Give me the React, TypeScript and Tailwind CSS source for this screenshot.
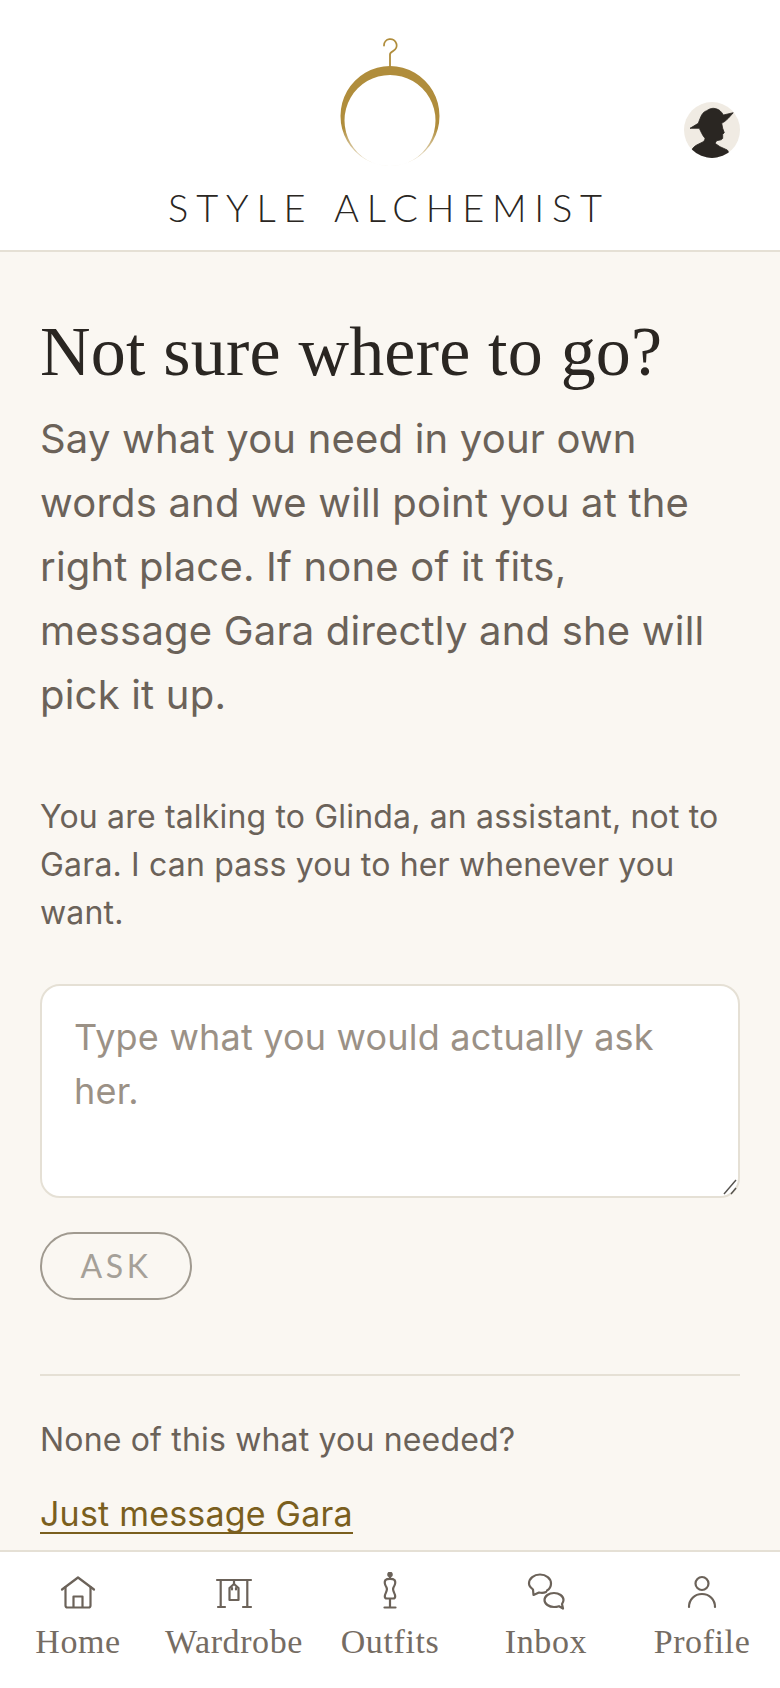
import React from "react";

const inter = "font-['Inter',sans-serif]";
const serif = "font-['Liberation_Serif',serif]";

function Logo() {
  return (
    <svg width="110" height="130" viewBox="335 38 110 130" className="block" fill="none">
      <defs>
        <linearGradient id="fade" x1="0" y1="66" x2="0" y2="166" gradientUnits="userSpaceOnUse">
          <stop offset="0" stopColor="#b08d3c" />
          <stop offset="0.62" stopColor="#b08d3c" />
          <stop offset="1" stopColor="#b08d3c" stopOpacity="0.1" />
        </linearGradient>
      </defs>
      <path
        fillRule="evenodd"
        fill="url(#fade)"
        d="M390 66a49.500 50 0 1 1 -0.01 0Z M390 75a45.500 45.500 0 1 0 0.01 0Z"
      />
      <path
        d="M384 45.500a6.300 6.300 0 1 1 9 5.600c-2 1-3 1.600-3 3.400V67"
        stroke="#b08d3c"
        strokeWidth="1.8"
        strokeLinecap="round"
      />
    </svg>
  );
}

function Avatar() {
  return (
    <svg width="56" height="56" viewBox="0 0 56 56" className="block">
      <defs>
        <clipPath id="av"><circle cx="28" cy="28" r="28" /></clipPath>
      </defs>
      <circle cx="28" cy="28" r="28" fill="#f0ebe3" />
      <g clipPath="url(#av)" fill="#2a2622" stroke="#2a2622" strokeWidth="0.8" strokeLinejoin="round">
        <path d="M6 26.300 L14.300 21.300 C15.500 18 16.500 15 17.700 13 C19 10.500 21 9.300 22.700 8.700 C25 7 27.500 6.300 29.300 6.300 C32 6.500 34.500 7.500 36 8.700 C37.500 10 38.500 11.500 39.300 13 L49.300 10.700 L44.300 16.300 C42 18.500 40 20.300 37.700 21.300 L38.700 26.300 L40.300 30.700 L38.700 32.300 L38.700 36.300 C38 37.500 37 38 36 38 L32.700 38.700 L31 41.300 L36 44.700 L43.300 48 C44.500 49.500 45 51 45.300 56 L8 56 L7.700 48 C9 45.500 11 44 12.700 43 L19.300 39.700 C20.500 38.500 21 37.500 21 36.300 C19.500 34.500 18.500 33 17.700 31.300 L15.300 26.300 Z" />
      </g>
    </svg>
  );
}

const ic = { fill: "none", stroke: "#6b6259", strokeWidth: 2.2, strokeLinecap: "round" as const, strokeLinejoin: "round" as const };

function HomeIcon() {
  return (
    <svg width="40" height="40" viewBox="0 0 40 40" className="block" {...ic}>
      <path d="M4 17.500 20 5.500 36 17.500" />
      <path d="M7.500 15V33.500a2 2 0 0 0 2 2h21a2 2 0 0 0 2-2V15" />
      <path d="M15.500 35V24.500h9V35" />
    </svg>
  );
}
function WardrobeIcon() {
  return (
    <svg width="40" height="40" viewBox="0 0 40 40" className="block" {...ic}>
      <path d="M3 8H37" />
      <path d="M6.700 8V35M33.300 8V35" />
      <path d="M4 35H11M29 35H37" />
      <path d="M20 8V12" />
      <path d="M20 12l-4.500 4v12h9V16z" />
      <path d="M18 17.500V16M22 17.500V16" />
    </svg>
  );
}
function OutfitIcon() {
  return (
    <svg width="40" height="40" viewBox="0 0 40 40" className="block" {...ic}>
      <circle cx="20" cy="2.500" r="1.700" fill="#6b6259" />
      <path d="M20 4v3" />
      <path d="M15.500 8C14 10 15 13 16.500 15.500 C18 17.500 16 20 15 23 C14.500 25 15 26 16 26.500 H24 C25 26 25.500 25 25 23 C24 20 22 17.500 23.500 15.500 C25 13 26 10 24.500 8 C23 6.500 17 6.500 15.500 8Z" />
      <path d="M20 27v8" />
      <path d="M14.500 35.500h11" />
    </svg>
  );
}
function InboxIcon() {
  return (
    <svg width="40" height="40" viewBox="0 0 40 40" className="block" {...ic}>
      <path d="M21 18.500C23.500 17 25 14.500 25 11.500 25 6.500 20 2.500 14 2.500S3 6.500 3 11.500C3 13.500 4.500 15.500 7 17.500L7.500 23 13 20.500C15 21 18 21 20 20" />
      <path d="M36 32C37 30.500 37.500 29.500 37.500 28 37.500 24 33 21 28 21S18.500 24 18.500 28 23 35 28 35C30 35 31.500 34.700 33 34.200L37 36.500Z" />
    </svg>
  );
}
function ProfileIcon() {
  return (
    <svg width="40" height="40" viewBox="0 0 40 40" className="block" {...ic}>
      <circle cx="20" cy="11.500" r="6.500" />
      <path d="M7 35c0-7.500 5.500-13 13-13s13 5.500 13 13" />
    </svg>
  );
}

const nav = [
  { label: "Home", icon: <HomeIcon /> },
  { label: "Wardrobe", icon: <WardrobeIcon /> },
  { label: "Outfits", icon: <OutfitIcon /> },
  { label: "Inbox", icon: <InboxIcon /> },
  { label: "Profile", icon: <ProfileIcon /> },
];

export default function App() {
  return (
    <div className={`h-[1688px] w-[780px] flex flex-col bg-[#faf7f2] overflow-hidden ${inter}`}>
      <header className="h-[252px] shrink-0 bg-white border-b-2 border-[#e5e0d5] grid grid-cols-[1fr_auto_1fr] px-[40px]">
        <div />
        <div className="flex flex-col items-center pt-[38px]">
          <Logo />
          <div className="mt-[22px] text-[38px] leading-[34px] font-light tracking-[0.205em] text-[#2a2622] font-['Lato',sans-serif] whitespace-nowrap [word-spacing:4px] pr-[2px]">
            STYLE ALCHEMIST
          </div>
        </div>
        <div className="flex justify-end pt-[102px]">
          <Avatar />
        </div>
      </header>

      <main className="flex-1 min-h-0 px-[40px] pt-[58px]">
        <h1 className={`${serif} text-[70px] leading-[84px] font-normal tracking-[0.2px] text-[#2a2622]`}>
          Not sure where to go?
        </h1>
        <p className="mt-[13px] text-[40px] leading-[64px] tracking-[0.2px] text-[#6b6259]">
          Say what you need in your own words and we will point you at the right place. If none of it fits, message Gara directly and she will pick it up.
        </p>
        <p className="mt-[66px] text-[32px] leading-[48px] tracking-[0.17px] text-[#6b6259]">
          You are talking to Glinda, an assistant, not to Gara. I can pass you to her whenever you want.
        </p>
        <div className="relative mt-[47px]">
          <textarea
            className="block w-full h-[214px] resize-none rounded-[20px] border-2 border-[#e5e0d5] bg-white px-[32px] pt-[24px] pb-[16px] text-[36px] leading-[54px] tracking-[0.2px] text-[#2a2622] placeholder:text-[#9b9186] outline-none"
            placeholder="Type what you would actually ask her."
          />
          <svg width="16" height="16" viewBox="0 0 16 16" className="absolute right-[2px] bottom-[3px]" stroke="#55524e" strokeWidth="1.4" fill="none">
            <path d="M2 15 14 1" />
            <path d="M9 15 14 9" />
          </svg>
        </div>
        <button className="mt-[34px] block w-[152px] h-[68px] rounded-full border-2 border-[#a09a90] text-[32px] tracking-[0.11em] font-normal text-[#a5a098] font-['Lato',sans-serif]">
          ASK
        </button>
        <div className="mt-[74px] border-t-2 border-[#e5e0d5]" />
        <p className="mt-[40px] text-[32px] leading-[48px] tracking-[0.17px] text-[#6b6259]">None of this what you needed?</p>
        <div className="mt-[32px]">
          <a className="inline-block text-[34px] leading-[36px] tracking-[0.2px] text-[#7a5f1e] border-b-2 border-[#7a5f1e]">Just message Gara</a>
        </div>
      </main>

      <nav className="h-[138px] shrink-0 bg-white border-t-2 border-[#e5e0d5] grid grid-cols-5">
        {nav.map((n) => (
          <div key={n.label} className="flex flex-col items-center pt-[20px]">
            {n.icon}
            <span className={`${serif} mt-[8px] text-[34px] leading-[44px] tracking-[0.6px] text-[#756c63]`}>{n.label}</span>
          </div>
        ))}
      </nav>
    </div>
  );
}
